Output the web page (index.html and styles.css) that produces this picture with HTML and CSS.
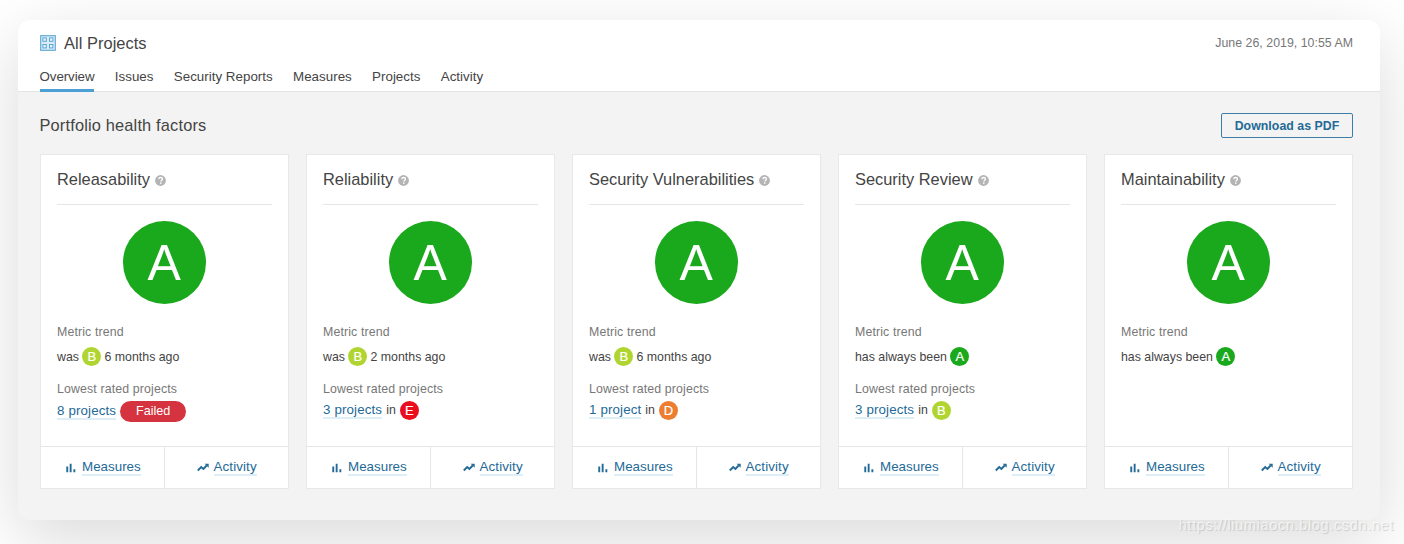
FILE: index.html
```html
<!DOCTYPE html>
<html lang="en">
<head>
<meta charset="utf-8">
<title>All Projects</title>
<link rel="stylesheet" href="styles.css">
</head>
<body>
<svg class="defs" aria-hidden="true">
  <symbol id="help" viewBox="0 0 11 11"><circle cx="5.5" cy="5.5" r="5.4" fill="#b4b4b4"/><path d="M3.7 4.1c.2-1.1.9-1.6 1.9-1.6 1.1 0 1.9.6 1.9 1.5 0 1.2-1.7 1.2-1.7 2.5" fill="none" stroke="#fff" stroke-width="1.3"/><rect x="5" y="7.4" width="1.5" height="1.4" fill="#fff"/></symbol>
  <symbol id="bars" viewBox="0 0 10 10"><path d="M.3 3.6h1.9v5.7H.3zM3.7.8h1.9v8.5H3.7zM7.4 6.3h1.9v3H7.4z" fill="#236a97"/></symbol>
  <symbol id="trend" viewBox="0 0 12 9"><path d="M.8 7.5l3.4-3.4 2.2 1.9L9.7 2.5" fill="none" stroke="#236a97" stroke-width="1.9"/><path d="M7.7.7h4v4z" fill="#236a97"/></symbol>
</svg>
<main class="panel">
  <header class="header">
    <div class="title-row">
      <svg class="logo" viewBox="0 0 16 16"><rect x=".7" y=".7" width="14.6" height="14.6" fill="#d9ecf7" stroke="#5ba6d4" stroke-width="1.1"/><g fill="#e9f5fc" stroke="#5ba6d4" stroke-width="1"><rect x="2.9" y="2.9" width="3.4" height="3.4"/><rect x="9.5" y="2.9" width="3.4" height="3.4"/><rect x="2.9" y="9.5" width="3.4" height="3.4"/><rect x="9.5" y="9.5" width="3.4" height="3.4"/></g></svg>
      <h1 class="title">All Projects</h1>
      <time class="date">June 26, 2019, 10:55 AM</time>
    </div>
    <nav class="tabs">
      <a class="tab active">Overview</a><a class="tab">Issues</a><a class="tab">Security Reports</a><a class="tab">Measures</a><a class="tab">Projects</a><a class="tab">Activity</a>
    </nav>
  </header>
  <section class="content">
    <div class="section-head">
      <h2 class="section-title">Portfolio health factors</h2>
      <button class="download">Download as PDF</button>
    </div>
    <div class="cards">
      <article class="card">
        <div class="card-body">
          <h3 class="card-title"><span>Releasability</span><svg class="help"><use href="#help"/></svg></h3>
          <div class="rating-big">A</div>
          <div class="label">Metric trend</div>
          <div class="trend"><span>was</span><b class="rating b">B</b><span>6 months ago</span></div>
          <div class="label">Lowest rated projects</div>
          <div class="lowest with-level"><a class="link projects">8 projects</a><span class="level">Failed</span></div>
        </div>
        <footer class="card-foot"><div class="foot-cell"><svg class="bars"><use href="#bars"/></svg><a class="link">Measures</a></div><div class="foot-cell"><svg class="line"><use href="#trend"/></svg><a class="link activity">Activity</a></div></footer>
      </article>
      <article class="card">
        <div class="card-body">
          <h3 class="card-title"><span>Reliability</span><svg class="help"><use href="#help"/></svg></h3>
          <div class="rating-big">A</div>
          <div class="label">Metric trend</div>
          <div class="trend"><span>was</span><b class="rating b">B</b><span>2 months ago</span></div>
          <div class="label">Lowest rated projects</div>
          <div class="lowest"><a class="link projects">3 projects</a><span>in</span><b class="rating e">E</b></div>
        </div>
        <footer class="card-foot"><div class="foot-cell"><svg class="bars"><use href="#bars"/></svg><a class="link">Measures</a></div><div class="foot-cell"><svg class="line"><use href="#trend"/></svg><a class="link activity">Activity</a></div></footer>
      </article>
      <article class="card">
        <div class="card-body">
          <h3 class="card-title"><span>Security Vulnerabilities</span><svg class="help"><use href="#help"/></svg></h3>
          <div class="rating-big">A</div>
          <div class="label">Metric trend</div>
          <div class="trend"><span>was</span><b class="rating b">B</b><span>6 months ago</span></div>
          <div class="label">Lowest rated projects</div>
          <div class="lowest"><a class="link projects">1 project</a><span>in</span><b class="rating d">D</b></div>
        </div>
        <footer class="card-foot"><div class="foot-cell"><svg class="bars"><use href="#bars"/></svg><a class="link">Measures</a></div><div class="foot-cell"><svg class="line"><use href="#trend"/></svg><a class="link activity">Activity</a></div></footer>
      </article>
      <article class="card">
        <div class="card-body">
          <h3 class="card-title"><span>Security Review</span><svg class="help"><use href="#help"/></svg></h3>
          <div class="rating-big">A</div>
          <div class="label">Metric trend</div>
          <div class="trend"><span>has always been</span><b class="rating a">A</b></div>
          <div class="label">Lowest rated projects</div>
          <div class="lowest"><a class="link projects">3 projects</a><span>in</span><b class="rating b">B</b></div>
        </div>
        <footer class="card-foot"><div class="foot-cell"><svg class="bars"><use href="#bars"/></svg><a class="link">Measures</a></div><div class="foot-cell"><svg class="line"><use href="#trend"/></svg><a class="link activity">Activity</a></div></footer>
      </article>
      <article class="card">
        <div class="card-body">
          <h3 class="card-title"><span>Maintainability</span><svg class="help"><use href="#help"/></svg></h3>
          <div class="rating-big">A</div>
          <div class="label">Metric trend</div>
          <div class="trend"><span>has always been</span><b class="rating a">A</b></div>
        </div>
        <footer class="card-foot"><div class="foot-cell"><svg class="bars"><use href="#bars"/></svg><a class="link">Measures</a></div><div class="foot-cell"><svg class="line"><use href="#trend"/></svg><a class="link activity">Activity</a></div></footer>
      </article>
    </div>
  </section>
</main>
<div class="watermark">https://liumiaocn.blog.csdn.net</div>
</body>
</html>
```
FILE: styles.css
```css
* { box-sizing: border-box; }
html, body { height: 544px; overflow: hidden; }
body {
  margin: 0;
  padding: 20px 24px 24px 18px;
  background: #fff;
  color: #444;
  font-family: "Liberation Sans", Arial, sans-serif;
  font-size: 12.35px;
}
h1, h2, h3 { margin: 0; font-weight: 400; }
.defs { position: absolute; width: 0; height: 0; }

.panel {
  width: 1362px;
  height: 500px;
  border-radius: 12px;
  overflow: hidden;
  background: #f3f3f3;
  box-shadow: 0 20px 68px rgba(0, 0, 0, .15);
}
.header {
  height: 72px;
  padding: 13px 27px 0 21.5px;
  background: #fff;
  border-bottom: 1px solid #e4e4e4;
}
.title-row { display: flex; align-items: center; height: 20px; }
.logo { width: 16px; height: 16px; margin-right: 8.5px; }
.title { font-size: 16.4px; line-height: 20px; letter-spacing: .05px; }
.date { margin-left: auto; color: #777; line-height: 20px; letter-spacing: .02px; }
.tabs { display: flex; gap: 20.3px; padding-top: 12px; }
.tab { height: 27px; line-height: 24px; font-size: 13.35px; letter-spacing: .02px; white-space: nowrap; }
.tab.active { border-bottom: 3px solid #4b9fd5; letter-spacing: -.08px; }

.content { padding: 21px 27px 0 21.5px; }
.section-head { display: flex; justify-content: space-between; height: 25px; margin-bottom: 16px; }
.section-title { font-size: 16.4px; line-height: 25px; letter-spacing: .16px; }
.download {
  width: 132px;
  height: 25px;
  padding: 0;
  border: 1px solid #3d7ea8;
  border-radius: 2px;
  background: transparent;
  color: #236a97;
  font: bold 12.3px "Liberation Sans", Arial, sans-serif;
  letter-spacing: .05px;
}

.cards { display: grid; grid-template-columns: repeat(5, 1fr); column-gap: 16.5px; }
.card {
  display: flex;
  flex-direction: column;
  height: 335px;
  background: #fff;
  border: 1px solid #e8e8e8;
}
.card-body { flex: 1; padding: 0 16.5px; }
.card-title {
  display: flex;
  align-items: center;
  gap: 5px;
  height: 50px;
  border-bottom: 1px solid #e6e6e6;
  font-size: 16.4px;
  white-space: nowrap;
}
.help { width: 11px; height: 11px; margin-top: 1px; }
.rating-big {
  width: 83px;
  height: 83px;
  margin: 16px auto 19px;
  border-radius: 50%;
  background: #1aa81c;
  color: #fff;
  font-size: 50px;
  line-height: 85px;
  text-align: center;
}
.label { height: 18px; line-height: 18px; color: #777; letter-spacing: .13px; }
.trend, .lowest { display: flex; align-items: center; white-space: nowrap; }
.trend { height: 20px; margin: 5px 0 14px; gap: 3.3px; padding-top: 1px; }
.lowest { height: 23px; gap: 4px; padding-top: 1px; }
.with-level { height: 25px; }
.rating {
  width: 19px;
  height: 19px;
  border-radius: 50%;
  color: #fff;
  font-size: 13px;
  font-weight: 400;
  line-height: 19px;
  text-align: center;
  -webkit-text-stroke: .2px #fff;
}
.a { background: #1aa81c; }
.b { background: #b0d531; }
.d { background: #ed7d30; }
.e { background: #ea0e1c; }
.level {
  width: 66px;
  height: 21px;
  border-radius: 11px;
  background: #d4333f;
  color: #fff;
  font-size: 12.6px;
  line-height: 21px;
  text-align: center;
}
.link { color: #236a97; font-size: 13.35px; line-height: 15px; border-bottom: 2px solid #deeef7; }
.projects { letter-spacing: .13px; }
.activity { letter-spacing: .1px; }
.card-foot { display: grid; grid-template-columns: 1fr 1fr; height: 42px; border-top: 1px solid #e6e6e6; }
.foot-cell { display: flex; align-items: center; justify-content: center; }
.foot-cell + .foot-cell { border-left: 1px solid #e6e6e6; }
.bars { width: 10px; height: 10px; margin: 1px 6px 0 2px; }
.line { width: 12px; height: 9px; margin: 0 5px 0 0; }

.watermark {
  position: absolute;
  right: 10px;
  top: 516px;
  color: rgba(255, 255, 255, .65);
  font-size: 14.5px;
  line-height: 18px;
  letter-spacing: .65px;
  text-shadow: 1px 1px 1px rgba(0, 0, 0, .15);
}
```
